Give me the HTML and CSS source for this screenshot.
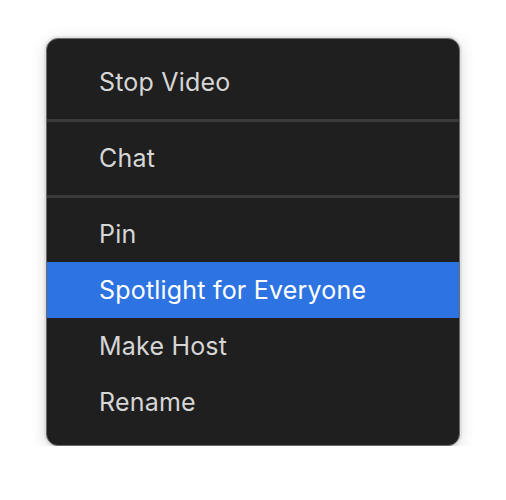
FILE: index.html
```html
<!DOCTYPE html>
<html lang="en">
<head>
  <meta charset="UTF-8" />
  <title>Participant Menu</title>
  <meta name="viewport" content="width=device-width, initial-scale=1" />
  <link rel="stylesheet" href="styles.css">
</head>
<body>
  <div class="menu">
    <div class="item">Stop Video</div>
    <div class="sep"></div>
    <div class="item">Chat</div>
    <div class="sep"></div>
    <div class="item">Pin</div>
    <div class="item active">Spotlight for Everyone</div>
    <div class="item">Make Host</div>
    <div class="item">Rename</div>
  </div>
</body>
</html>
```

FILE: styles.css
```css
body {
  margin: 0;
  background: #ffffff;
  font-family: Inter, "Noto Sans", sans-serif;
}

.menu {
  width: 414px;
  margin: 38px 0 0 46px;
  padding: 15px 0;
  box-sizing: border-box;
  background: #1f1f1f;
  border: 1px solid #6a6a6a;
  border-radius: 12px;
  box-shadow: 0 0 0 2px rgba(0, 0, 0, 0.06), 0 3px 16px rgba(0, 0, 0, 0.16);
}

.item {
  height: 56px;
  line-height: 56px;
  padding-left: 52px;
  font-size: 25px;
  letter-spacing: 0.2px;
  color: #d6d6d6;
}

.item.active {
  background: #2d74e2;
  color: #ffffff;
}

.sep {
  height: 3px;
  margin: 9px 0 8px;
  background: #3a3a3a;
}
```
